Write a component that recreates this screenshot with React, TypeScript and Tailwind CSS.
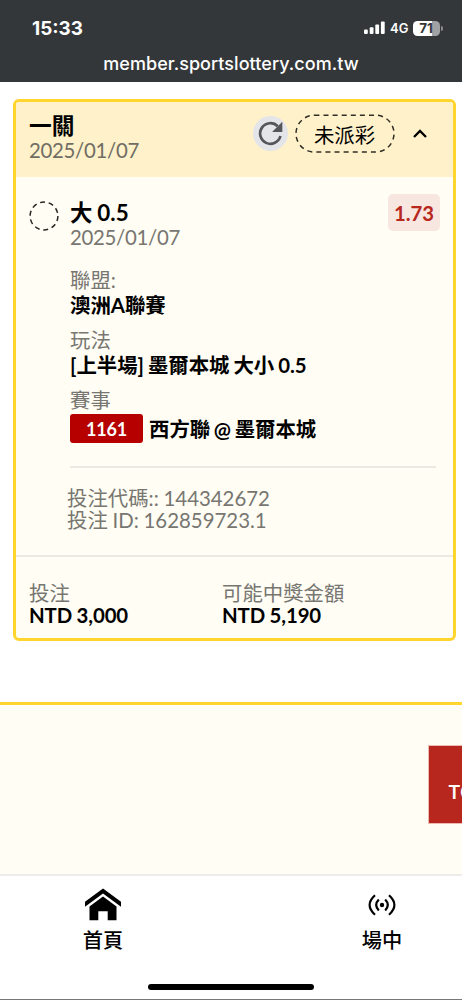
import React from "react";

function StatusBar() {
  return (
    <header className="h-[82px] bg-[#343739] font-['Inter','Liberation_Sans',sans-serif] text-white">
      <div className="flex h-[52px] items-start justify-between pt-[16px] pr-[19px] pl-[32px]">
        <span className="text-[18.9px] leading-[25px] font-bold">15:33</span>
        <div className="flex h-6 items-center">
          <svg width="21" height="14" viewBox="0 0 21 14" fill="#fff" className="block">
            <rect x="0" y="8.5" width="3.8" height="4.5" rx="1" />
            <rect x="5.7" y="6.3" width="3.8" height="6.7" rx="1" />
            <rect x="11.3" y="3.5" width="3.8" height="9.5" rx="1" />
            <rect x="16.9" y="0.5" width="3.8" height="12.5" rx="1" />
          </svg>
          <span className="ml-[5px] w-[19px] text-[13px] leading-6 font-semibold">4G</span>
          <div className="ml-[4px] flex h-[15px] w-[27px] items-center justify-center rounded-[4.5px] bg-[linear-gradient(90deg,#fff_0,#fff_19px,#a0a1a2_19px)] pr-px text-[13.5px] leading-[15px] font-bold text-[#343739]">
            71
          </div>
          <span className="ml-px h-[5px] w-[2px] rounded-r-full bg-[#8b8d8e]" />
        </div>
      </div>
      <p className="pt-px text-center text-[18px] leading-[22px] font-medium tracking-[0.05px]">member.sportslottery.com.tw</p>
    </header>
  );
}

function RefreshButton() {
  return (
    <button className="flex size-[35px] items-center justify-center rounded-full bg-[#e4e5e8]" aria-label="refresh">
      <svg width="25" height="25" viewBox="0 0 25 25" fill="none" className="block">
        <path d="M22.4 15A10.3 10.3 0 1 1 19.7 5.2" stroke="#55565a" strokeWidth="2.7" />
        <path d="M24.3 .8V11H14.1Z" fill="#55565a" />
      </svg>
    </button>
  );
}

function CardHeader() {
  return (
    <div className="flex h-[75px] bg-[#fff1ca] pl-[13px]">
      <div className="w-[224px] pt-[12px]">
        <h2 className="h-[24px] text-[22.7px] leading-6 font-bold">一關</h2>
        <p className="leading-6 tracking-[-0.3px] text-[#706e64]">2025/01/07</p>
      </div>
      <div className="flex h-[39px] items-center pt-[24px]">
        <RefreshButton />
        <div className="ml-[7px] w-[100px]">
          <div className="relative flex h-[39px] items-center justify-center">
            <svg width="100" height="39" viewBox="0 0 100 39" fill="none" className="absolute inset-0">
              <rect x="1" y="1.2" width="98" height="36.8" rx="18.4" stroke="#302e26" strokeWidth="1.5" strokeDasharray="5 4.1" />
            </svg>
            <span className="pt-[2px] pr-px text-[20.4px] leading-6">未派彩</span>
          </div>
        </div>
        <svg width="14" height="9" viewBox="0 0 14 9" fill="none" className="ml-[18px]">
          <path d="M1 8L7 2L13 8" stroke="#000" strokeWidth="2.3" />
        </svg>
      </div>
    </div>
  );
}

function Selection() {
  return (
    <section className="flex h-[378px] pt-[17px] pl-[13px]">
      <svg width="30" height="30" viewBox="0 0 30 30" fill="none" className="mt-[7px] shrink-0">
        <circle cx="15" cy="15" r="13.9" stroke="#282723" strokeWidth="1.5" strokeDasharray="5 3.73" />
      </svg>
      <div className="ml-[11px] w-[370px]">
        <div className="flex h-[67px] justify-between">
          <div className="pt-[7px]">
            <h3 className="h-[24px] text-[22.4px] leading-6 font-bold [word-spacing:-0.5px]">大 0.5</h3>
            <p className="leading-6 tracking-[-0.3px] text-[#777671]">2025/01/07</p>
          </div>
          <div className="flex h-[37px] w-[52px] items-center justify-center rounded-[5px] bg-[#f8e6e0] text-[20.3px] leading-6 font-bold text-[#b7271d]">
            1.73
          </div>
        </div>
        <div className="h-[60px] pt-[7px]">
          <p className="h-[25px] leading-6 text-[#777671]">聯盟:</p>
          <p className="leading-6 font-bold">澳洲A聯賽</p>
        </div>
        <div className="h-[60px] pt-[7px]">
          <p className="h-[25px] leading-6 text-[#777671]">玩法</p>
          <p className="leading-6 font-bold [word-spacing:-1px]">[上半場] 墨爾本城 大小 0.5</p>
        </div>
        <div className="pt-[7px]">
          <p className="h-[26px] leading-6 text-[#777671]">賽事</p>
          <div className="flex h-[29px] items-center font-bold">
            <span className="flex h-[29px] w-[73px] items-center justify-center rounded-[3px] bg-[#b60000] text-[18px] leading-6 font-bold tracking-[-0.2px] text-white">1161</span>
            <span className="ml-[6px] leading-6 [word-spacing:-1.3px]">西方聯 @ 墨爾本城</span>
          </div>
        </div>
        <div className="mt-[23px] mr-[4px] h-[2px] bg-[#ece9e2]" />
        <div className="-ml-[3px] pt-[19px] leading-[22px] text-[#777671] [word-spacing:-0.5px]">
          <p>投注代碼:: 144342672</p>
          <p>投注 ID: 162859723.1</p>
        </div>
      </div>
    </section>
  );
}

function Amount({ label, value }: { label: string; value: string }) {
  return (
    <div className="w-[193px] shrink-0 whitespace-nowrap">
      <p className="h-[22px] leading-6 text-[#777671]">{label}</p>
      <p className="leading-6 font-bold tracking-[-0.1px] [word-spacing:-0.5px]">{value}</p>
    </div>
  );
}

function BottomNav() {
  return (
    <nav className="flex h-[124px] flex-col justify-between border-b border-[#777] bg-white">
      <div className="flex pl-[63px] text-[20.2px] font-medium">
        <a className="flex w-[80px] flex-col items-center pt-[12px]">
          <svg width="36" height="33" viewBox="0 0 36 33" fill="#000" className="block">
            <path d="M18 .5L36 13.7V18.7L18 5.6L0 18.7V13.7Z" />
            <path d="M18 8.6L31.5 18.6V32.2H22.7V23.2H13.3V32.2H4.5V18.6Z" />
          </svg>
          <span className="mt-[7px] leading-6">首頁</span>
        </a>
        <a className="ml-[199px] flex w-[80px] flex-col items-center pt-[12px]">
          <svg width="28" height="33" viewBox="0 0 28 33" fill="none" stroke="#000" strokeWidth="2.2" className="block">
            <circle cx="14" cy="17" r="2.2" fill="#000" stroke="none" />
            <path d="M10.8 11.6Q5.6 17 10.8 22.4M17.2 11.6Q22.4 17 17.2 22.4M7 7.3Q-3.8 17 7 26.7M21 7.3Q31.8 17 21 26.7" />
          </svg>
          <span className="mt-[7px] leading-6">場中</span>
        </a>
      </div>
      <div className="mb-[9px] ml-[148px] h-[6px] w-[166px] rounded-full bg-black" />
    </nav>
  );
}

export default function App() {
  return (
    <div lang="zh-Hant" className="flex h-[1000px] w-[462px] flex-col overflow-hidden bg-white font-['Lato','Noto_Sans_CJK_TC',sans-serif] text-[20.4px] text-black">
      <StatusBar />
      <main className="h-[620px] shrink-0 pt-[17px] pl-[13px]">
        <article className="h-[542px] w-[443px] overflow-hidden rounded-[6px] border-3 border-[#ffd52e] bg-[#fffdf4]">
          <CardHeader />
          <Selection />
          <footer className="flex h-[83px] border-t-2 border-[#ece9e2] pt-[24px] pl-[13px]">
            <Amount label="投注" value="NTD 3,000" />
            <Amount label="可能中獎金額" value="NTD 5,190" />
          </footer>
        </article>
      </main>
      <section className="flex h-[174px] shrink-0 justify-end border-t-3 border-b-2 border-t-[#ffd52e] border-b-[#ececea] bg-[#fffdf4] pt-[40px]">
        <button className="flex h-[79px] w-[34px] items-center overflow-hidden border border-r-0 border-[#edbab2] bg-[#b7271d] pt-[17px] pl-[19px] font-['Inter','Liberation_Sans',sans-serif] text-[19px] leading-6 font-semibold text-white">
          TO
        </button>
      </section>
      <BottomNav />
    </div>
  );
}
